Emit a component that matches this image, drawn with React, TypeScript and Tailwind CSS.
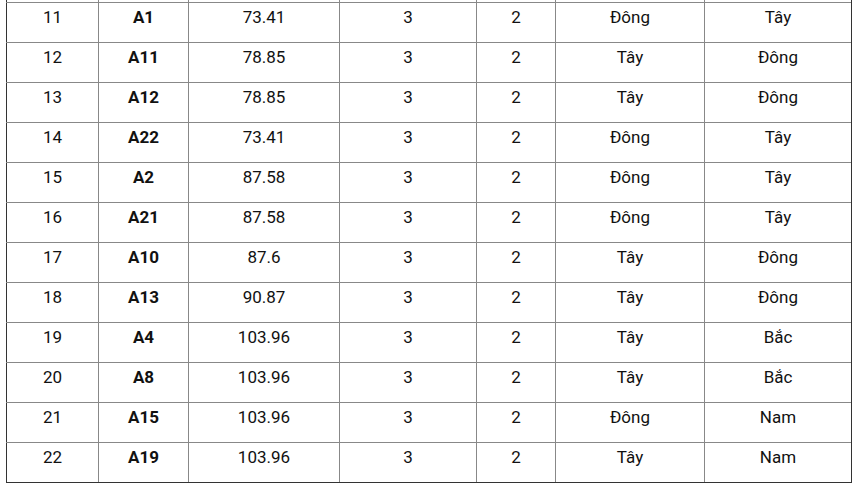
const rows = [
  { stt: 11, can: "A1", dt: "73.41", pn: 3, wc: 2, cua: "Đông", bc: "Tây" },
  { stt: 12, can: "A11", dt: "78.85", pn: 3, wc: 2, cua: "Tây", bc: "Đông" },
  { stt: 13, can: "A12", dt: "78.85", pn: 3, wc: 2, cua: "Tây", bc: "Đông" },
  { stt: 14, can: "A22", dt: "73.41", pn: 3, wc: 2, cua: "Đông", bc: "Tây" },
  { stt: 15, can: "A2", dt: "87.58", pn: 3, wc: 2, cua: "Đông", bc: "Tây" },
  { stt: 16, can: "A21", dt: "87.58", pn: 3, wc: 2, cua: "Đông", bc: "Tây" },
  { stt: 17, can: "A10", dt: "87.6", pn: 3, wc: 2, cua: "Tây", bc: "Đông" },
  { stt: 18, can: "A13", dt: "90.87", pn: 3, wc: 2, cua: "Tây", bc: "Đông" },
  { stt: 19, can: "A4", dt: "103.96", pn: 3, wc: 2, cua: "Tây", bc: "Bắc" },
  { stt: 20, can: "A8", dt: "103.96", pn: 3, wc: 2, cua: "Tây", bc: "Bắc" },
  { stt: 21, can: "A15", dt: "103.96", pn: 3, wc: 2, cua: "Đông", bc: "Nam" },
  { stt: 22, can: "A19", dt: "103.96", pn: 3, wc: 2, cua: "Tây", bc: "Nam" },
];

const gridCols = "grid grid-cols-[92px_90px_151px_137px_79px_149px_147px]";
const cell = "border-l border-l-[#888] pt-[4px] text-center";

export default function App() {
  return (
    <div
      className="min-h-screen w-[860px] bg-white pl-[6px] text-[17px] text-[#111]"
      style={{ fontFamily: "Roboto, 'Noto Sans', sans-serif" }}
    >
      <div className="w-[846px] border-b border-r border-[#333]">
        {/* tail of the row above, cut off by the screenshot */}
        <div className={`${gridCols} h-[2px]`}>
          <div className="border-l border-l-[#333]" />
          <div className="border-l border-l-[#888]" />
          <div className="border-l border-l-[#888]" />
          <div className="border-l border-l-[#888]" />
          <div className="border-l border-l-[#888]" />
          <div className="border-l border-l-[#888]" />
          <div className="border-l border-l-[#888]" />
        </div>

        {rows.map((r) => (
          <div key={r.stt} className={`${gridCols} h-[40px] border-t border-[#888] leading-[20px]`}>
            <div className="border-l border-l-[#333] pt-[4px] text-center">{r.stt}</div>
            <div className={`${cell} font-bold`}>{r.can}</div>
            <div className={cell}>{r.dt}</div>
            <div className={cell}>{r.pn}</div>
            <div className={cell}>{r.wc}</div>
            <div className={cell}>{r.cua}</div>
            <div className={cell}>{r.bc}</div>
          </div>
        ))}
      </div>
    </div>
  );
}
